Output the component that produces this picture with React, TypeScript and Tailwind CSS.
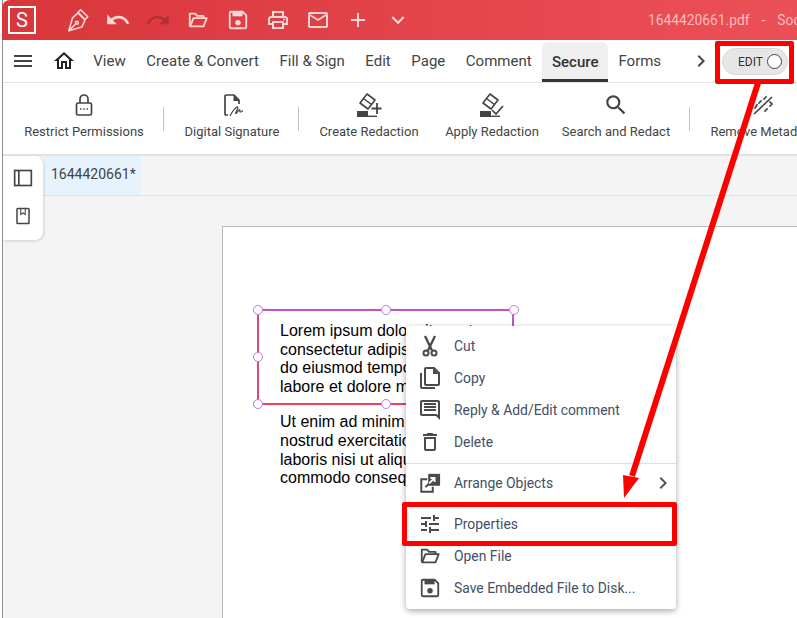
import React from "react";
import {
  MdAdd,
  MdChevronRight,
  MdKeyboardArrowDown,
  MdMailOutline,
  MdMenu,
  MdOutlineDelete,
  MdOutlineHome,
  MdOutlinePrint,
  MdRedo,
  MdSearch,
  MdTune,
  MdUndo,
} from "react-icons/md";

const FolderIcon = ({ className }: { className?: string }) => (
  <svg viewBox="0 0 24 24" fill="none" stroke="currentColor" strokeWidth="2" className={className}>
    <path d="M3 19V5h6l2 2.500h7V10" strokeLinejoin="round" />
    <path d="M3 19h15l3.500-9H7l-3.500 9" strokeLinejoin="round" />
  </svg>
);

const SaveIcon = ({ className }: { className?: string }) => (
  <svg viewBox="0 0 24 24" className={className} fill="none" stroke="currentColor" strokeWidth="2">
    <path d="M4 3h13l4 4v13a1 1 0 0 1-1 1H4a1 1 0 0 1-1-1V4a1 1 0 0 1 1-1z" />
    <rect x="6" y="3" width="11" height="5" fill="currentColor" stroke="none" />
    <circle cx="12" cy="15" r="3" fill="currentColor" stroke="none" />
  </svg>
);

const PenNibIcon = ({ className }: { className?: string }) => (
  <svg viewBox="0 0 24 24" fill="none" stroke="currentColor" strokeWidth="1.500" strokeLinejoin="round" className={className}>
    <path d="M14.500 2.500l6.500 6.500-2.500 2.500-6.500-6.500z" />
    <path d="M12 5.500l6.500 6.500-3 6.500-12 3.500 3.500-12z" />
    <path d="M3.500 22l6.500-6.500" />
    <circle cx="11" cy="14.500" r="1.300" />
  </svg>
);

const LockIcon = () => (
  <svg viewBox="0 0 24 24" className="w-[24px] h-[24px] text-[#444]" fill="none" stroke="currentColor" strokeWidth="1.700">
    <path d="M8 10V6a4 4 0 0 1 8 0v4" />
    <rect x="4.500" y="10" width="15" height="12" rx="1.500" />
    <path d="M8 16h1.500M11.300 16h1.500M14.600 16h1.500" strokeWidth="1.500" />
  </svg>
);

const SignatureIcon = () => (
  <svg viewBox="0 0 24 24" className="w-[24px] h-[24px] text-[#444]" fill="none" stroke="currentColor" strokeWidth="1.700">
    <path d="M8 22H6a1 1 0 0 1-1-1V3a1 1 0 0 1 1-1h8l5 5v4" />
    <path d="M13.500 2l6 6h-6z" fill="currentColor" stroke="none" />
    <path d="M10 23c2-4 5-8 7-9 1-.5 1 1 0 3s-2 3.500-1 3.500 2.500-4 3.500-4-.5 2.500 1 2.500 1.500-1 2.500-1.500" strokeWidth="1.200" />
  </svg>
);

const EraserIcon = ({ badge }: { badge: "plus" | "check" }) => (
  <svg viewBox="15 4 26 26" className="w-[26px] h-[26px] text-[#444]" fill="none" stroke="currentColor">
    <path d="M19 15l7-9 8 6-7 9z" strokeWidth="1.600" strokeLinejoin="round" />
    <path d="M22.500 10.500l8 6" strokeWidth="1.500" />
    <rect x="16" y="23" width="11" height="6" fill="currentColor" stroke="none" />
    <path d="M27 28.300h9" strokeWidth="1.400" />
    {badge === "plus" ? (
      <path d="M36 15v11M30.500 20.500h10" strokeWidth="1.800" />
    ) : (
      <path d="M28 22l4 4 7-8" strokeWidth="1.700" />
    )}
  </svg>
);

const MetadataIcon = () => (
  <svg viewBox="0 0 24 24" className="w-[24px] h-[24px] text-[#444]" fill="none" stroke="currentColor" strokeWidth="1.700">
    <path d="M3 21L21 4" />
    <path d="M6 12l-2 3M10 8l-2 2M13 6l2-2M19 13l2-2-2-2M14 18l2-2" strokeLinecap="square" />
  </svg>
);

const SidebarPanelIcon = () => (
  <svg viewBox="0 0 24 24" className="w-[20px] h-[20px] text-[#444]" fill="none" stroke="currentColor" strokeWidth="2">
    <rect x="2" y="3" width="20" height="18" />
    <path d="M7 3v18" />
  </svg>
);

const BookmarkIcon = () => (
  <svg viewBox="0 0 24 24" className="w-[18px] h-[18px] text-[#444]" fill="none" stroke="currentColor" strokeWidth="2">
    <rect x="4" y="2" width="16" height="20" rx="1" />
    <path d="M9 2v8l3-2 3 2V2" strokeWidth="1.400" />
  </svg>
);

const ScissorsIcon = () => (
  <svg viewBox="0 0 24 24" className="w-[24px] h-[24px]" fill="none" stroke="currentColor" strokeWidth="2">
    <path d="M7 2l7 14.500M17 2l-7 14.500" strokeWidth="2.300" />
    <circle cx="8" cy="19" r="2.500" />
    <circle cx="16" cy="19" r="2.500" />
  </svg>
);

const CopyIcon = () => (
  <svg viewBox="0 0 24 24" className="w-[24px] h-[24px]" fill="none" stroke="currentColor" strokeWidth="2">
    <path d="M3 7v14a1 1 0 0 0 1 1h13" />
    <path d="M8 2h8l5 5v11a1 1 0 0 1-1 1H8a1 1 0 0 1-1-1V3a1 1 0 0 1 1-1z" />
    <path d="M15 2l6 6h-6z" fill="currentColor" stroke="none" />
  </svg>
);

const CommentIcon = () => (
  <svg viewBox="0 0 24 24" className="w-[24px] h-[24px]" fill="currentColor">
    <path d="M22 4c0-1.100-.9-2-2-2H4c-1.100 0-2 .9-2 2v12c0 1.100.9 2 2 2h14l4 4V4zm-2 13.170L18.830 16H4V4h16v13.170zM18 11H6v2h12v-2zm0-3H6v2h12V8zm0-3H6v2h12V5z" />
  </svg>
);

const ArrangeIcon = () => (
  <svg viewBox="0 0 24 24" className="w-[22px] h-[22px]" fill="none" stroke="currentColor">
    <rect x="10" y="2" width="13" height="13" fill="currentColor" stroke="none" />
    <path d="M9 8H2.500v13.500H15V16" strokeWidth="2.200" />
    <path d="M7 16.500l4.500-4.500" strokeWidth="2.200" />
    <path d="M11 12.500l5.500-5.500M12.500 6.500h4.500v4.500" stroke="#fff" strokeWidth="2" />
  </svg>
);

const topIcon = "text-[#fbd5d5]";

const menuTabs = ["View", "Create & Convert", "Fill & Sign", "Edit", "Page", "Comment"];

const ribbon = [
  { label: "Restrict Permissions", width: "w-[120px]", icon: <LockIcon />, sep: true },
  { label: "Digital Signature", width: "w-[94px]", icon: <SignatureIcon />, sep: true },
  { label: "Create Redaction", width: "w-[98px] mr-[28px]", icon: <EraserIcon badge="plus" /> },
  { label: "Apply Redaction", width: "w-[92px] mr-[24px]", icon: <EraserIcon badge="check" /> },
  { label: "Search and Redact", width: "w-[108px]", icon: <MdSearch className="w-[26px] h-[26px] text-[#444]" />, sep: true },
  { label: "Remove Metadata", width: "w-[104px]", icon: <MetadataIcon /> },
];

const Handle = ({ className }: { className: string }) => (
  <span className={`absolute w-[10px] h-[10px] rounded-full bg-white border-[1.500px] border-[#b57ee0] ${className}`} />
);

const MenuItem = ({
  icon,
  label,
  arrow,
}: {
  icon: React.ReactNode;
  label: string;
  arrow?: boolean;
}) => (
  <div className="h-[32px] flex items-center">
    <span className="w-[48px] flex justify-center text-[#4a4a4a]">{icon}</span>
    <span className="text-[13.900px] text-[#445066]">{label}</span>
    {arrow && <MdChevronRight className="ml-auto mr-[1px] w-[24px] h-[24px] text-[#555]" />}
  </div>
);

export default function App() {
  return (
    <div className="relative w-[797px] h-[618px] overflow-hidden bg-white pl-[2px] font-['Roboto',sans-serif]">
      <div className="flex flex-col h-full border-l border-[#8f8f8f]">
        {/* title bar */}
        <div className="h-[40px] shrink-0 -ml-px flex items-center overflow-hidden rounded-tl-lg bg-gradient-to-r from-[#d8363b] to-[#ec5057]">
          <div className="shrink-0 ml-[6px] w-[28px] h-[28px] border-[2.500px] border-white flex items-center justify-center text-white text-[20px]">
            S
          </div>
          <div className="shrink-0 ml-[22px] flex items-center">
            <span className="w-[40px] flex justify-center"><PenNibIcon className={`w-[26px] h-[26px] ${topIcon}`} /></span>
            <span className="w-[40px] flex justify-center"><MdUndo className={`w-[26px] h-[26px] ${topIcon}`} /></span>
            <span className="w-[40px] flex justify-center"><MdRedo className="w-[26px] h-[26px] text-[#b53036]" /></span>
            <span className="w-[40px] flex justify-center"><FolderIcon className={`w-[22px] h-[22px] ${topIcon}`} /></span>
            <span className="w-[40px] flex justify-center"><SaveIcon className={`w-[22px] h-[22px] ${topIcon}`} /></span>
            <span className="w-[40px] flex justify-center"><MdOutlinePrint className={`w-[24px] h-[24px] ${topIcon}`} /></span>
            <span className="w-[40px] flex justify-center"><MdMailOutline className={`w-[24px] h-[24px] ${topIcon}`} /></span>
            <span className="w-[40px] flex justify-center"><MdAdd className={`w-[24px] h-[24px] ${topIcon}`} /></span>
            <span className="w-[40px] flex justify-center"><MdKeyboardArrowDown className={`w-[26px] h-[26px] ${topIcon}`} /></span>
          </div>
          <div className="shrink-0 ml-[230px] flex gap-[12px] text-[13.800px] text-[#f9bcbe] whitespace-nowrap">
            <span>1644420661.pdf</span>
            <span>-</span>
            <span>Soda PDF</span>
          </div>
        </div>

        {/* menu row */}
        <div className="h-[43px] shrink-0 flex items-stretch border-b border-[#e4e4e4] text-[15px] text-[#444]">
          <span className="ml-[8px] w-[24px] flex items-center"><MdMenu className="w-[24px] h-[24px] text-[#444]" /></span>
          <span className="ml-[17px] w-[24px] flex items-center"><MdOutlineHome className="w-[26px] h-[26px] text-[#222]" /></span>
          <div className="ml-[7px] flex items-stretch">
            {menuTabs.map((t) => (
              <span key={t} className="px-[10.300px] flex items-center whitespace-nowrap">{t}</span>
            ))}
            <span className="mt-[2px] pt-[3px] px-[10px] flex items-center font-medium text-[#333] bg-[#efefef] rounded-t-md border-b-[3px] border-[#333]">
              Secure
            </span>
            <span className="px-[10px] flex items-center">Forms</span>
          </div>
          <div className="ml-auto flex items-stretch mr-[9px]">
            <span className="flex items-center"><MdChevronRight className="w-[24px] h-[24px] text-[#444]" /></span>
            <div className="ml-[9px] mt-[8px] w-[66px] h-[27px] rounded-full bg-[#e6e6e6] border border-[#d8d8d8] flex items-center justify-end gap-[4px] pr-[5px] text-[12px] text-[#333]">
              EDIT
              <span className="w-[15px] h-[15px] rounded-full bg-white border border-[#444]" />
            </div>
          </div>
        </div>

        {/* ribbon */}
        <div className="h-[73px] shrink-0 flex items-start pl-[21px] pt-[9px] border-b-2 border-[#e2e2e2] overflow-hidden">
          {ribbon.map((r) => (
            <React.Fragment key={r.label}>
              <div className={`shrink-0 flex flex-col items-center ${r.width}`}>
                <span className="h-[26px] flex items-center">{r.icon}</span>
                <span className="mt-[4px] text-[13px] text-[#444] whitespace-nowrap">{r.label}</span>
              </div>
              {r.sep && <span className="shrink-0 ml-[19px] mr-[21px] mt-[15px] w-px h-[24px] bg-[#c4c4c4]" />}
            </React.Fragment>
          ))}
        </div>

        {/* document area */}
        <div className="relative flex-1 flex flex-col bg-[#f4f4f4] min-h-0">
          <div className="h-[40px] shrink-0 pl-[41px] border-b border-[#e2e2e2]">
            <div className="w-[97px] h-full bg-[#e6f3fc] pl-[7px] pt-[8px] text-[14px] text-[#444]">1644420661*</div>
          </div>

          <div className="absolute left-0 top-0 w-[40px] h-[84px] bg-white rounded-br-lg rounded-tr-lg shadow-[1px_1px_3px_rgba(0,0,0,0.15)] flex flex-col items-center pt-[12px] gap-[19px]">
            <SidebarPanelIcon />
            <BookmarkIcon />
          </div>

          {/* page */}
          <div className="flex-1 pl-[219px] pt-[30px] min-h-0">
            <div className="h-full bg-white border-l border-t border-[#b9b9b9] pl-[57px] pt-[95px] font-['Liberation_Sans',sans-serif] text-[16px] leading-[18.600px] text-black whitespace-nowrap">
              <p>Lorem ipsum dolor sit amet,</p>
              <p>consectetur adipiscing elit, sed</p>
              <p>do eiusmod tempor incididunt ut</p>
              <p>labore et dolore magna aliqua.</p>
              <div className="h-[17px]" />
              <p>Ut enim ad minim veniam, quis</p>
              <p>nostrud exercitation ullamco</p>
              <p>laboris nisi ut aliquip ex ea</p>
              <p>commodo consequat.</p>
            </div>
          </div>
        </div>
      </div>

      {/* selected text frame */}
      <div className="absolute left-[257px] top-[309px] w-[257px] h-[96px] border-2 border-[#e0457a] border-t-[#c052c4] border-r-[#c052c4] border-b-[#f0405a]">
        <Handle className="left-[-6px] top-[-6px]" />
        <Handle className="left-[122px] top-[-6px]" />
        <Handle className="left-[250px] top-[-6px]" />
        <Handle className="left-[-6px] top-[41px]" />
        <Handle className="left-[-6px] top-[88px]" />
        <Handle className="left-[122px] top-[88px]" />
        <Handle className="left-[250px] top-[88px]" />
      </div>

      {/* context menu */}
      <div className="absolute left-[406px] top-[326px] w-[270px] h-[283px] bg-white rounded shadow-[0_2px_6px_rgba(0,0,0,0.35)] pt-[4px]">
        <MenuItem icon={<ScissorsIcon />} label="Cut" />
        <MenuItem icon={<CopyIcon />} label="Copy" />
        <MenuItem icon={<CommentIcon />} label="Reply & Add/Edit comment" />
        <MenuItem icon={<MdOutlineDelete className="w-[24px] h-[24px]" />} label="Delete" />
        <div className="mt-[5px] mb-[3px] h-px bg-[#dedede]" />
        <MenuItem icon={<ArrangeIcon />} label="Arrange Objects" arrow />
        <div className="my-[4px] h-px bg-[#dedede]" />
        <MenuItem icon={<MdTune className="w-[24px] h-[24px]" />} label="Properties" />
        <MenuItem icon={<FolderIcon className="w-[22px] h-[22px]" />} label="Open File" />
        <MenuItem icon={<SaveIcon className="w-[22px] h-[22px]" />} label="Save Embedded File to Disk..." />
      </div>

      {/* red annotations */}
      <div className="absolute left-[715px] top-[41px] w-[79px] h-[43px] border-[5px] border-[#ff0000] rounded-[2px]" />
      <div className="absolute left-[402px] top-[502px] w-[275px] h-[44px] border-[5px] border-[#ff0000] rounded-[2px]" />
      <svg className="absolute left-0 top-0 pointer-events-none" width="797" height="618" viewBox="0 0 797 618">
        <path d="M758 83L632 476" stroke="#ff0000" strokeWidth="6" fill="none" />
        <path d="M624 498L623 475L639 478z" fill="#ff0000" />
      </svg>
    </div>
  );
}
